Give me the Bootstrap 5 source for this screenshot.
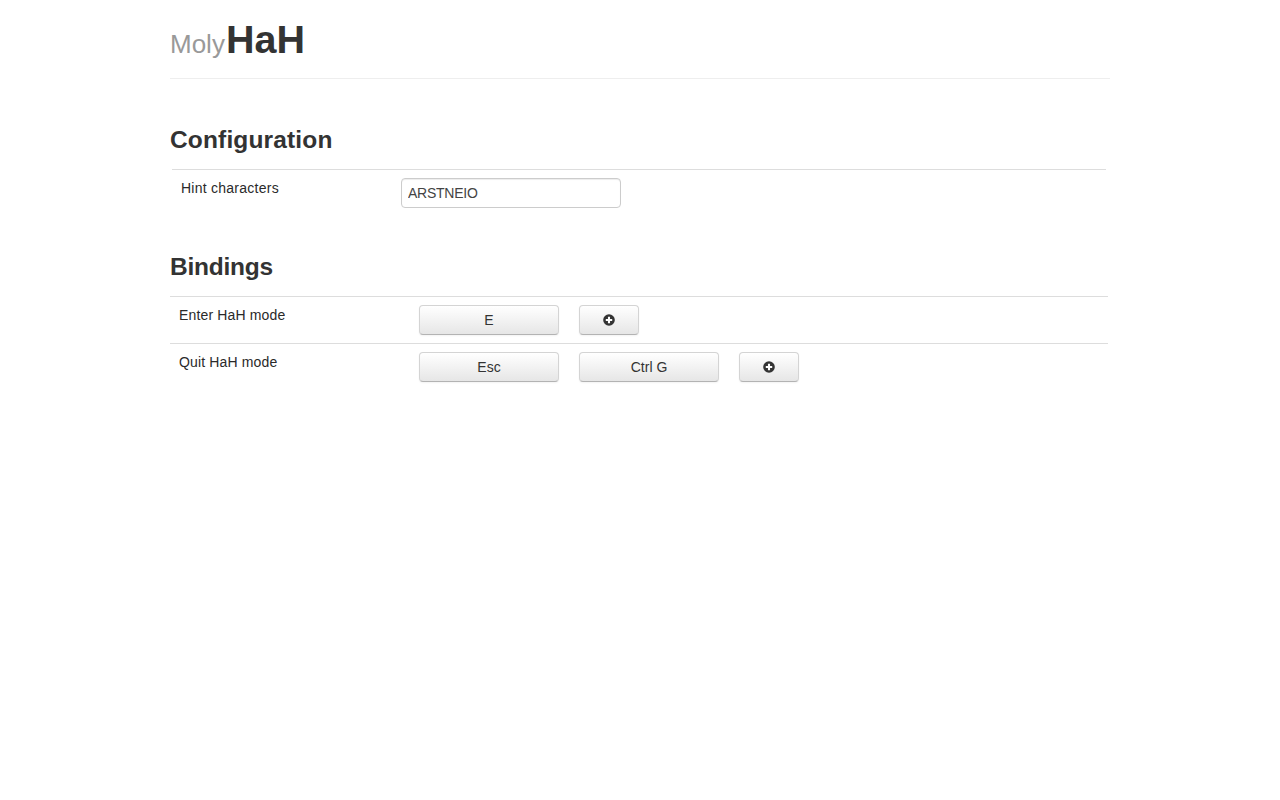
<!DOCTYPE html>
<html lang="en">
<head>
<meta charset="utf-8">
<title>MolyHaH</title>
<link href="https://cdn.jsdelivr.net/npm/bootstrap@5.3.0/dist/css/bootstrap.min.css" rel="stylesheet">
<style>
body { font-family: "Liberation Sans", Arial, sans-serif; font-size: 14px; line-height: 20px; color: #333; background: #fff; }
.page-wrap { width: 940px; margin: 0 auto; }
.top-head { height: 79px; border-bottom: 1px solid #eee; padding-top: 17px; margin-bottom: 40px; }
.brand-line { margin: 0; line-height: 44px; font-size: 39.5px; font-weight: 700; color: #333; }
.brand-line span { font-size: 26px; font-weight: 400; color: #999; margin-right: 1px; }
.sec-title { font-size: 24.5px; font-weight: 700; line-height: 42px; margin: 0 0 8px; color: #333; }
.title-wide { letter-spacing: .15px; }
.title-narrow { letter-spacing: -.25px; }
.cfg-row { margin: 0 4px 0 2px; border-top: 1px solid #ddd; padding: 8px 9px; height: 77px; }
.cfg-label { width: 220px; color: #2a2a2a; line-height: 20px; letter-spacing: .25px; }
.hint-input { width: 220px; height: 30px; border: 1px solid #ccc; border-radius: 4px; padding: 4px 6px; font: 14px/20px "Liberation Sans", Arial, sans-serif; color: #444; letter-spacing: -.25px; box-shadow: inset 0 1px 1px rgba(0,0,0,.075); }
.bind-row { margin-right: 2px; border-top: 1px solid #ddd; padding: 8px 8px 8px 9px; height: 47px; }
.bind-label { width: 240px; color: #2a2a2a; line-height: 20px; letter-spacing: .15px; }
.key-btn { height: 30px; width: 140px; padding: 0; font-size: 14px; line-height: 28px; color: #333; border: 1px solid #d4d4d4; border-bottom-color: #b3b3b3; border-radius: 4px; background: linear-gradient(#fff, #e6e6e6); box-shadow: inset 0 1px 0 rgba(255,255,255,.2), 0 1px 2px rgba(0,0,0,.05); }
.add-btn { width: 60px; }
.plus-ico { width: 12px; height: 12px; display: block; margin: 0 auto; }
.key-gap { gap: 20px; }
</style>
</head>
<body>
<div class="page-wrap">
  <header class="top-head">
    <h1 class="brand-line"><span>Moly</span>HaH</h1>
  </header>
  <h2 class="sec-title title-wide">Configuration</h2>
  <div class="cfg-row d-flex align-items-start">
    <div class="cfg-label">Hint characters</div>
    <input class="hint-input" type="text" value="ARSTNEIO">
  </div>
  <h2 class="sec-title title-narrow">Bindings</h2>
  <div class="bind-row d-flex align-items-start">
    <div class="bind-label">Enter HaH mode</div>
    <div class="d-flex key-gap">
      <button class="key-btn" type="button">E</button>
      <button class="key-btn add-btn" type="button" aria-label="Add"><svg class="plus-ico" viewBox="0 0 12 12"><circle cx="6" cy="6" r="5.8" fill="#333"/><path d="M6 2.8v6.4M2.8 6h6.4" stroke="#fff" stroke-width="2.1"/></svg></button>
    </div>
  </div>
  <div class="bind-row d-flex align-items-start">
    <div class="bind-label">Quit HaH mode</div>
    <div class="d-flex key-gap">
      <button class="key-btn" type="button">Esc</button>
      <button class="key-btn" type="button">Ctrl G</button>
      <button class="key-btn add-btn" type="button" aria-label="Add"><svg class="plus-ico" viewBox="0 0 12 12"><circle cx="6" cy="6" r="5.8" fill="#333"/><path d="M6 2.8v6.4M2.8 6h6.4" stroke="#fff" stroke-width="2.1"/></svg></button>
    </div>
  </div>
</div>
<script src="https://cdn.jsdelivr.net/npm/bootstrap@5.3.0/dist/js/bootstrap.bundle.min.js"></script>
</body>
</html>
